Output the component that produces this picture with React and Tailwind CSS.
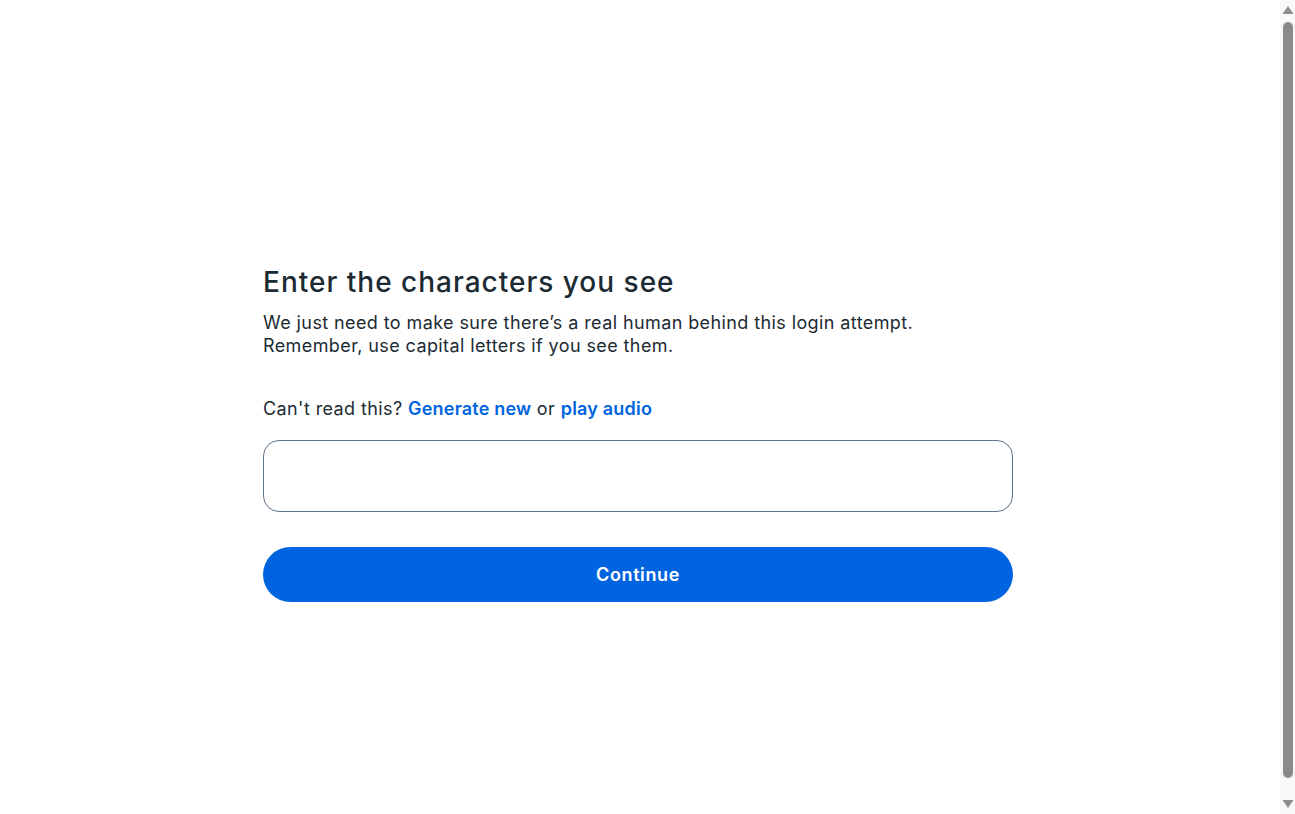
export default function App() {
  return (
    <div className="flex h-[814px] overflow-hidden bg-white font-['Inter','Noto_Sans',sans-serif] text-[#1c2b33]">
      <main className="flex flex-1 justify-center pr-[4px]">
        <div className="w-[750px] pt-[264px]">
          <h1 className="text-[28px] leading-[36px] font-medium tracking-[1px]">Enter the characters you see</h1>
          <p className="mt-[11px] text-[18px] leading-[23px] tracking-[0.4px]">
            We just need to make sure there’s a real human behind this login attempt.
            <br />
            Remember, use capital letters if you see them.
          </p>
          <p className="mt-[40px] text-[18px] leading-[23px] tracking-[0.4px]">
            Can't read this?{" "}
            <a href="#" className="font-semibold tracking-[0.2px] text-[#0064e0]">Generate new</a> or{" "}
            <a href="#" className="font-semibold tracking-[0.2px] text-[#0064e0]">play audio</a>
          </p>
          <input
            type="text"
            className="mt-[20px] block h-[72px] w-full rounded-[16px] border border-[#5e7283] px-4 text-[17px] outline-none"
          />
          <button className="mt-[35px] h-[55px] w-full rounded-full bg-[#0064e0] text-[18px] font-semibold tracking-[0.6px] text-white">
            Continue
          </button>
        </div>
      </main>
      {/* fake scrollbar */}
      <div className="flex w-[15px] flex-col items-center bg-[#f8f8f8] pt-[5px] pb-[5px]">
        <svg width="12" height="10" viewBox="0 0 12 10" className="shrink-0">
          <polygon points="6,1 11.5,9 0.5,9" fill="#8f8f8f" />
        </svg>
        <div className="mt-[7px] w-[10px] flex-1 rounded-full bg-[#8a8a8a]" />
        <svg width="12" height="10" viewBox="0 0 12 10" className="mt-[21px] shrink-0">
          <polygon points="0.5,1 11.5,1 6,9" fill="#8f8f8f" />
        </svg>
      </div>
    </div>
  );
}
